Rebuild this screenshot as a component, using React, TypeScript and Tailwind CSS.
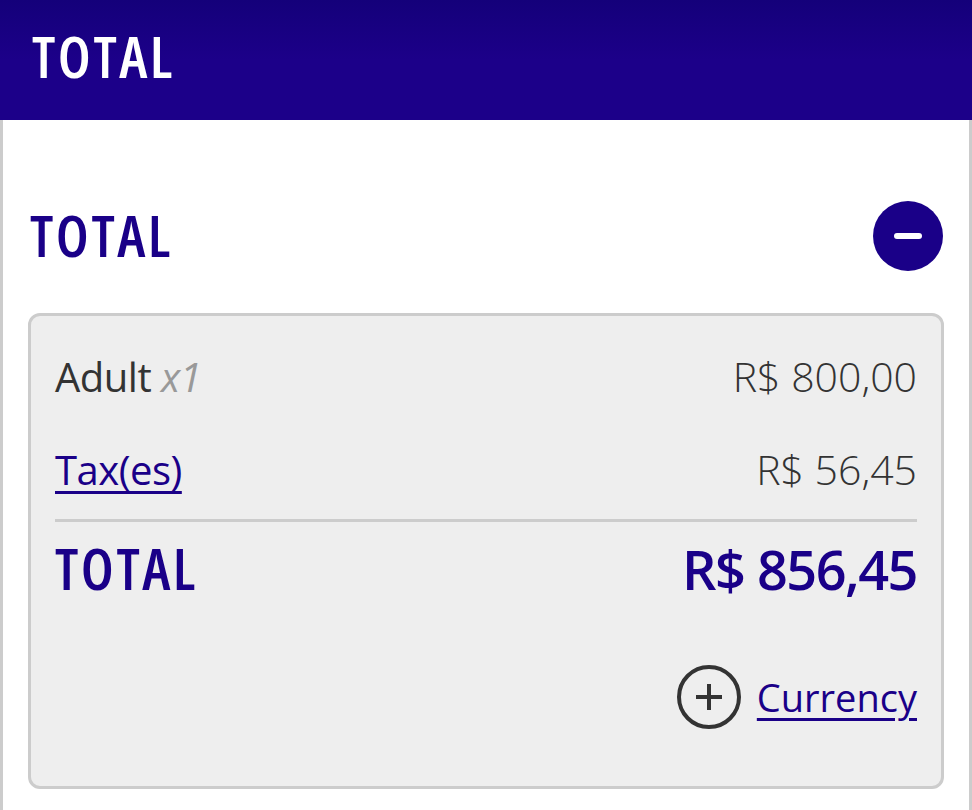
import React from "react";

export default function App() {
  return (
    <div className="w-[972px] h-[810px] overflow-hidden bg-white" style={{ fontFamily: '"Open Sans", "Noto Sans", sans-serif' }}>
      <div className="h-[120px] bg-gradient-to-b from-[#14007a] via-[#1c0089] to-[#1c0089] flex items-center pl-[32px] pb-[8px]">
        <h1 className="text-white text-[58px] font-semibold font-stretch-condensed tracking-[2.5px] leading-none">TOTAL</h1>
      </div>
      <div className="h-[690px] border-x-[3px] border-[#cccccc] px-[25px] pt-[80px]">
        <div className="flex items-center justify-between h-[72px]">
          <h2 className="text-[#1a0088] text-[58px] font-semibold font-stretch-condensed tracking-[2.5px] leading-none pl-[2px] pb-[3px]">TOTAL</h2>
          <div className="w-[70px] h-[70px] rounded-full bg-[#1a0088] flex items-center justify-center mr-[1px]">
            <div className="w-[28px] h-[6px] rounded-full bg-white" />
          </div>
        </div>
        <div className="mt-[41px] h-[476px] bg-[#eeeeee] border-[3px] border-[#cccccc] rounded-[12px] px-[24px] pt-[40px]">
          <div className="flex justify-between items-baseline h-[50px]">
            <span className="text-[40px] text-[#333333] font-medium tracking-[-0.5px] leading-none">
              Adult <span className="italic font-normal text-[#999999]">x1</span>
            </span>
            <span className="text-[41px] text-[#333333] font-light leading-none">R$ 800,00</span>
          </div>
          <div className="flex justify-between items-baseline h-[50px] mt-[43px]">
            <a className="text-[40px] text-[#1a0088] underline underline-offset-[6px] decoration-[3px] tracking-[-0.5px] leading-none">Tax(es)</a>
            <span className="text-[41px] text-[#333333] font-light leading-none">R$ 56,45</span>
          </div>
          <div className="h-[3px] bg-[#cccccc] mt-[20px]" />
          <div className="flex justify-between items-baseline mt-[17px]">
            <span className="text-[58px] text-[#1a0088] font-semibold font-stretch-condensed tracking-[2.5px] leading-none">TOTAL</span>
            <span className="text-[54px] text-[#1a0088] font-semibold tracking-[-1.5px] leading-none">R$ 856,45</span>
          </div>
          <div className="flex justify-end items-center gap-[14px] mt-[66px]">
            <svg width="68" height="68" viewBox="0 0 68 68">
              <circle cx="34" cy="34" r="30" fill="none" stroke="#333333" strokeWidth="4" />
              <line x1="34" y1="21" x2="34" y2="47" stroke="#333333" strokeWidth="4" />
              <line x1="21" y1="34" x2="47" y2="34" stroke="#333333" strokeWidth="4" />
            </svg>
            <a className="text-[38px] text-[#1a0088] underline underline-offset-[6px] decoration-[3px] leading-none">Currency</a>
          </div>
        </div>
      </div>
    </div>
  );
}
